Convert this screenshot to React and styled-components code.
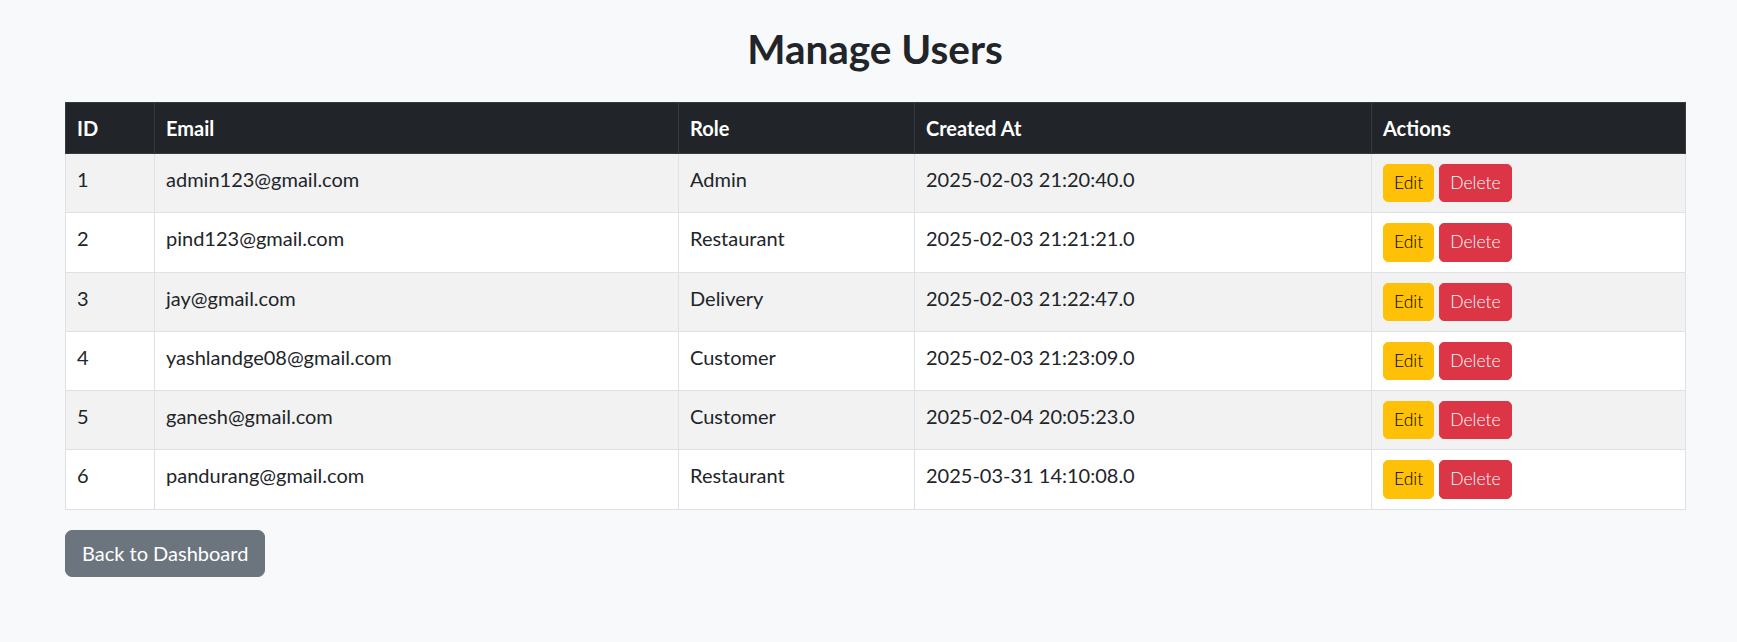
import React from "react";
import styled, { createGlobalStyle } from "styled-components";

const GlobalStyle = createGlobalStyle`
  html, body {
    margin: 0;
    padding: 0;
    background: #f8f9fa;
  }
  body {
    font-family: Lato, "Liberation Sans", sans-serif;
    color: #212529;
    font-size: 20px;
    line-height: 30px;
  }
  * { box-sizing: border-box; }
`;

const Page = styled.div`
  padding: 25px 52px 40px 65px;
`;

const Title = styled.h2`
  margin: 0 0 29px;
  text-align: center;
  font-size: 40.5px;
  line-height: 48px;
  font-weight: 700;
  color: #212529;
`;

const Table = styled.table`
  width: 1620px;
  border-collapse: collapse;
  table-layout: fixed;
  margin-bottom: 20px;
  vertical-align: top;
`;

const Col = styled.col`
  width: ${(p) => p.$w}px;
`;

const HeadCell = styled.th`
  background: #212529;
  color: #ffffff;
  font-weight: 700;
  text-align: left;
  padding: 10px 11px;
  line-height: 30px;
  border: 1px solid #373b3e;
  vertical-align: top;
`;

const Row = styled.tr`
  background: ${(p) => (p.$striped ? "#f2f2f2" : "#ffffff")};
`;

const Cell = styled.td`
  padding: 10px 11px;
  border: 1px solid #dee2e6;
  line-height: 30px;
  vertical-align: top;
  color: #212529;
`;

const Actions = styled.div`
  display: flex;
  gap: 5px;
`;

const variants = {
  warning: { bg: "#ffc107", fg: "#000000" },
  danger: { bg: "#dc3545", fg: "#ffffff" },
};

const ActionButton = styled.button`
  font-family: Lato, "Liberation Sans", sans-serif;
  font-size: 17.5px;
  line-height: 26.3px;
  font-weight: 300;
  padding: 5px 10px;
  border: 1px solid ${(p) => variants[p.$variant].bg};
  border-radius: 5px;
  background: ${(p) => variants[p.$variant].bg};
  color: ${(p) => variants[p.$variant].fg};
  cursor: pointer;
`;

const BackButton = styled.button`
  font-family: Lato, "Liberation Sans", sans-serif;
  font-size: 20px;
  line-height: 30px;
  padding: 7.5px 16px;
  border: 1px solid #6c757d;
  border-radius: 7px;
  background: #6c757d;
  color: #ffffff;
  cursor: pointer;
`;

const columns = [
  { label: "ID", w: 89 },
  { label: "Email", w: 524 },
  { label: "Role", w: 236 },
  { label: "Created At", w: 457 },
  { label: "Actions", w: 314 },
];

const users = [
  { id: 1, email: "admin123@gmail.com", role: "Admin", created: "2025-02-03 21:20:40.0" },
  { id: 2, email: "pind123@gmail.com", role: "Restaurant", created: "2025-02-03 21:21:21.0" },
  { id: 3, email: "jay@gmail.com", role: "Delivery", created: "2025-02-03 21:22:47.0" },
  { id: 4, email: "yashlandge08@gmail.com", role: "Customer", created: "2025-02-03 21:23:09.0" },
  { id: 5, email: "ganesh@gmail.com", role: "Customer", created: "2025-02-04 20:05:23.0" },
  { id: 6, email: "pandurang@gmail.com", role: "Restaurant", created: "2025-03-31 14:10:08.0" },
];

export default function App() {
  return (
    <>
      <GlobalStyle />
      <Page>
        <Title>Manage Users</Title>
        <Table>
          <colgroup>
            {columns.map((c) => (
              <Col key={c.label} $w={c.w} />
            ))}
          </colgroup>
          <thead>
            <tr>
              {columns.map((c) => (
                <HeadCell key={c.label}>{c.label}</HeadCell>
              ))}
            </tr>
          </thead>
          <tbody>
            {users.map((u, i) => (
              <Row key={u.id} $striped={i % 2 === 0}>
                <Cell>{u.id}</Cell>
                <Cell>{u.email}</Cell>
                <Cell>{u.role}</Cell>
                <Cell>{u.created}</Cell>
                <Cell>
                  <Actions>
                    <ActionButton $variant="warning">Edit</ActionButton>
                    <ActionButton $variant="danger">Delete</ActionButton>
                  </Actions>
                </Cell>
              </Row>
            ))}
          </tbody>
        </Table>
        <BackButton>Back to Dashboard</BackButton>
      </Page>
    </>
  );
}
